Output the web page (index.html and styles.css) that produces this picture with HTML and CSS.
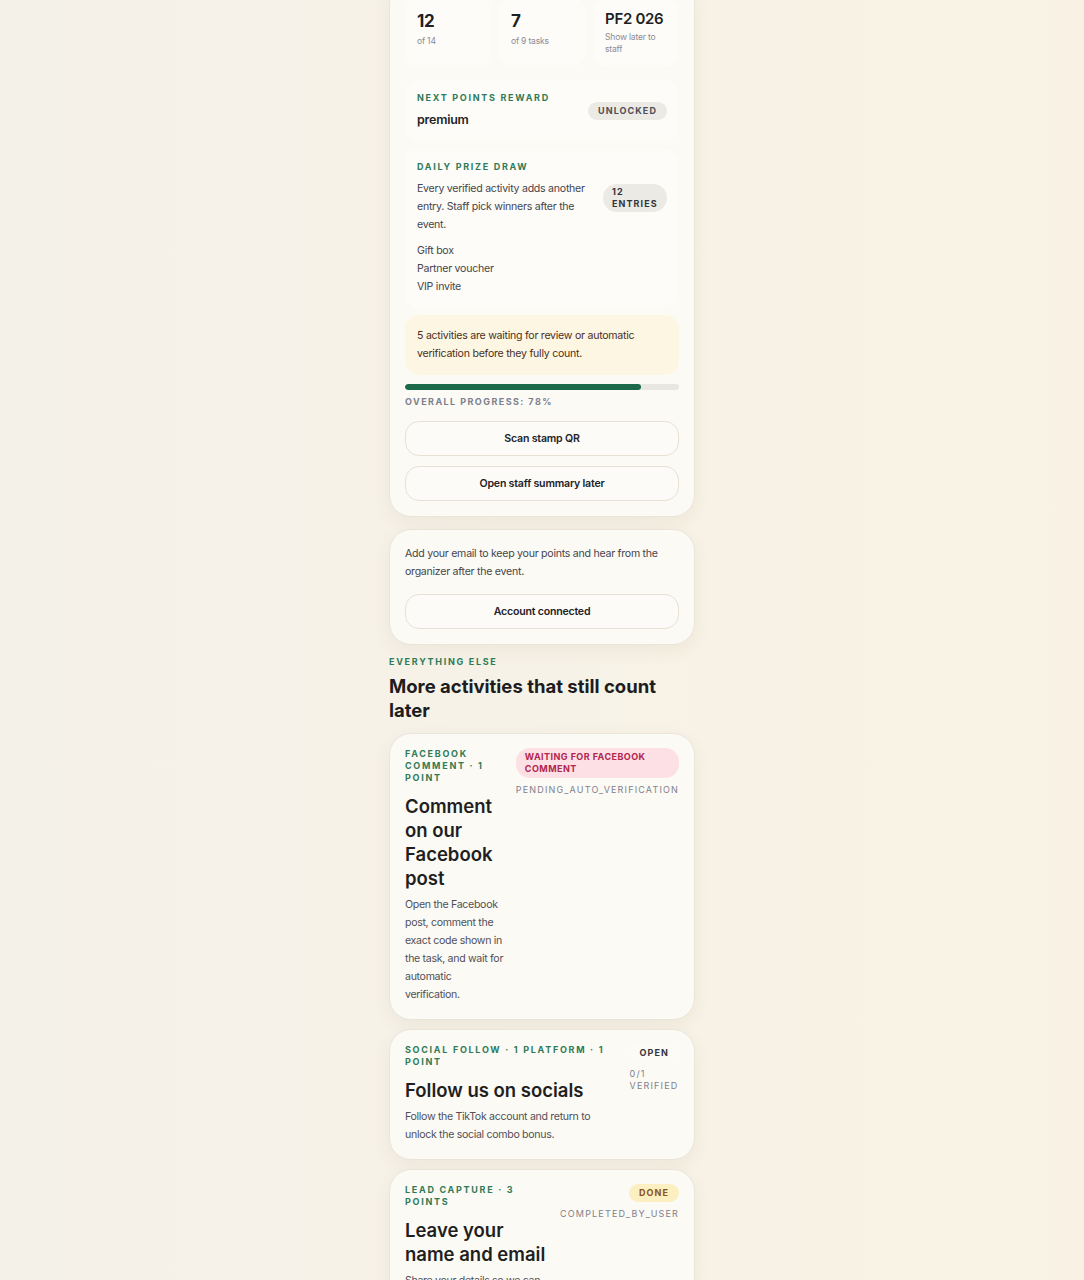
FILE: index.html
```html
<!DOCTYPE html>
<html lang="en">
<head>
<meta charset="utf-8">
<title>Activities</title>
<link rel="stylesheet" href="styles.css">
</head>
<body>
<main class="col">
  <section class="card card-top">
    <div class="stats">
      <div class="tile">
        <div class="tile-value">12</div>
        <div class="tile-sub">of 14</div>
      </div>
      <div class="tile">
        <div class="tile-value">7</div>
        <div class="tile-sub">of 9 tasks</div>
      </div>
      <div class="tile">
        <div class="tile-value tile-code">PF2 026</div>
        <div class="tile-sub">Show later to staff</div>
      </div>
    </div>

    <div class="panel panel-reward">
      <div class="panel-head">
        <div class="panel-main">
          <div class="eyebrow">Next points reward</div>
          <div class="panel-value">premium</div>
        </div>
        <span class="pill pill-grey">Unlocked</span>
      </div>
    </div>

    <div class="panel panel-draw">
      <div class="panel-head">
        <div class="panel-main">
          <div class="eyebrow">Daily prize draw</div>
          <p class="panel-text">Every verified activity adds another entry. Staff pick winners after the event.</p>
        </div>
        <span class="pill pill-grey pill-stack">12 entries</span>
      </div>
      <ul class="prize-list">
        <li>Gift box</li>
        <li>Partner voucher</li>
        <li>VIP invite</li>
      </ul>
    </div>

    <div class="notice">5 activities are waiting for review or automatic verification before they fully count.</div>

    <div class="progress"><div class="progress-fill" style="width:86%"></div></div>
    <div class="progress-label">Overall progress: 78%</div>

    <button class="btn btn-first" type="button">Scan stamp QR</button>
    <button class="btn" type="button">Open staff summary later</button>
  </section>

  <section class="card card-account">
    <p class="card-text">Add your email to keep your points and hear from the organizer after the event.</p>
    <button class="btn" type="button">Account connected</button>
  </section>

  <header class="section-head">
    <div class="eyebrow">Everything else</div>
    <h2 class="section-title">More activities that still count later</h2>
  </header>

  <article class="card activity activity-first">
    <div class="activity-main">
      <div class="eyebrow">Facebook comment · 1 point</div>
      <h3 class="activity-title">Comment on our Facebook post</h3>
      <p class="activity-desc">Open the Facebook post, comment the exact code shown in the task, and wait for automatic verification.</p>
    </div>
    <div class="activity-side">
      <span class="pill pill-pink">Waiting for Facebook comment</span>
      <span class="status">PENDING_AUTO_VERIFICATION</span>
    </div>
  </article>

  <article class="card activity">
    <div class="activity-main">
      <div class="eyebrow">Social follow · 1 platform · 1 point</div>
      <h3 class="activity-title">Follow us on socials</h3>
      <p class="activity-desc">Follow the TikTok account and return to unlock the social combo bonus.</p>
    </div>
    <div class="activity-side">
      <span class="pill pill-plain">Open</span>
      <span class="status">0/1 VERIFIED</span>
    </div>
  </article>

  <article class="card activity">
    <div class="activity-main">
      <div class="eyebrow">Lead capture · 3 points</div>
      <h3 class="activity-title">Leave your name and email</h3>
      <p class="activity-desc">Share your details so we can follow up after the event.</p>
    </div>
    <div class="activity-side">
      <span class="pill pill-yellow">Done</span>
      <span class="status">COMPLETED_BY_USER</span>
    </div>
  </article>
</main>
</body>
</html>
```

FILE: styles.css
```css
* { box-sizing: border-box; }

html, body {
  margin: 0;
  padding: 0;
}

body {
  background: linear-gradient(90deg, #f4f1e9 0%, #f7f2e7 50%, #f9f2e4 100%);
  font-family: Inter, "Noto Sans", sans-serif;
  color: #1f1f24;
  min-height: 1280px;
}

.col {
  width: 306px;
  margin: -19px auto 0;
  display: flex;
  flex-direction: column;
  gap: 9px;
  padding-bottom: 40px;
}

.card {
  background: #fcfaf5;
  border: 1px solid #ebe5d9;
  border-radius: 22px;
  box-shadow: 0 6px 18px rgba(90, 70, 30, 0.06);
  padding: 15px;
}

.card-top {
  display: flex;
  flex-direction: column;
}

.stats {
  display: grid;
  grid-template-columns: repeat(3, 1fr);
  gap: 8px;
}

.tile {
  background: #fdfcf9;
  border-radius: 14px;
  padding: 12px;
}

.tile-value {
  font-size: 17px;
  font-weight: 700;
  line-height: 24px;
  letter-spacing: -0.02em;
}

.tile-code {
  font-size: 15px;
  line-height: 20px;
  font-weight: 600;
}

.tile-sub {
  margin-top: 2px;
  font-size: 8.5px;
  line-height: 12px;
  color: #8a8b94;
  letter-spacing: -0.02em;
}

.panel {
  background: #fdfcf9;
  border-radius: 14px;
  padding: 12px;
}

.panel-reward {
  margin-top: 13px;
}

.panel-draw {
  margin-top: 8px;
}

.panel-head {
  display: flex;
  align-items: center;
  gap: 12px;
}

.panel-main {
  flex: 1 1 auto;
  min-width: 0;
}

.eyebrow {
  font-size: 9px;
  line-height: 12px;
  font-weight: 700;
  letter-spacing: 0.19em;
  text-transform: uppercase;
  color: #2f7b57;
}

.panel-value {
  margin-top: 7px;
  font-size: 12.5px;
  line-height: 18px;
  font-weight: 600;
  letter-spacing: -0.02em;
}

.panel-text {
  margin: 7px 0 0;
  font-size: 10.6px;
  line-height: 18px;
  color: #45454c;
  letter-spacing: -0.025em;
}

.prize-list {
  list-style: none;
  margin: 8px 0 0;
  padding: 0;
  font-size: 10.6px;
  line-height: 18px;
  color: #45454c;
  letter-spacing: -0.025em;
}

.pill {
  display: inline-block;
  font-size: 9px;
  line-height: 12px;
  font-weight: 700;
  letter-spacing: 0.12em;
  text-transform: uppercase;
  border-radius: 999px;
  padding: 3px 10px;
  flex: none;
}

.pill-grey {
  background: #ebeae5;
  color: #4f4f58;
}

.pill-stack {
  width: 64px;
  padding: 2px 9px;
  border-radius: 14px;
  color: #34343c;
}

.notice {
  margin-top: 7px;
  background: #fdf6e2;
  border-radius: 14px;
  padding: 12px;
  font-size: 10.6px;
  line-height: 18px;
  color: #4a3026;
  letter-spacing: -0.025em;
}

.progress {
  margin-top: 9px;
  height: 6px;
  border-radius: 3px;
  background: #e9e7e1;
  overflow: hidden;
}

.progress-fill {
  height: 100%;
  background: #1d6a4a;
  border-radius: 3px;
}

.progress-label {
  margin-top: 6px;
  font-size: 9px;
  line-height: 11px;
  font-weight: 700;
  letter-spacing: 0.16em;
  text-transform: uppercase;
  color: #7b7f8e;
}

.btn {
  display: block;
  width: 100%;
  height: 35px;
  margin-top: 10px;
  background: #fdfbf7;
  border: 1px solid #e7e1d5;
  border-radius: 14px;
  font-family: inherit;
  font-size: 10.6px;
  font-weight: 600;
  color: #222227;
  letter-spacing: -0.02em;
  cursor: pointer;
}

.btn-first {
  margin-top: 14px;
}

.card-account {
  margin-top: 3px;
}

.card-text {
  margin: 0;
  font-size: 10.6px;
  line-height: 18px;
  color: #45454c;
  letter-spacing: -0.025em;
}

.card-account .btn {
  margin-top: 13px;
}

.section-head {
  margin-top: 2px;
}

.section-title {
  margin: 6px 0 0;
  font-size: 18.5px;
  line-height: 24px;
  font-weight: 700;
  letter-spacing: 0;
  color: #1c1c21;
}

.activity {
  display: flex;
  align-items: flex-start;
  gap: 12px;
  padding-top: 14px;
}

.activity-first {
  margin-top: 2px;
}

.activity-main {
  flex: 0 1 auto;
  min-width: 0;
}

.activity-side {
  flex: 0 1 auto;
  display: flex;
  flex-direction: column;
  align-items: flex-end;
}

.activity-title {
  margin: 10px 0 0;
  font-size: 18.5px;
  line-height: 24px;
  font-weight: 600;
  letter-spacing: 0;
  color: #1f1f22;
}

.activity-desc {
  margin: 6px 0 0;
  font-size: 10.6px;
  line-height: 18px;
  color: #505058;
  letter-spacing: -0.03em;
}

.pill-pink {
  background: #fde0e5;
  color: #b1254e;
  letter-spacing: 0.05em;
  border-radius: 14px;
  padding: 3px 9px;
}

.pill-plain {
  background: #fcfbf7;
  color: #33333b;
}

.pill-yellow {
  background: #fcefc1;
  color: #8a5416;
}

.status {
  margin-top: 6px;
  font-size: 9px;
  line-height: 12px;
  letter-spacing: 0.13em;
  color: #7f808b;
}
```
